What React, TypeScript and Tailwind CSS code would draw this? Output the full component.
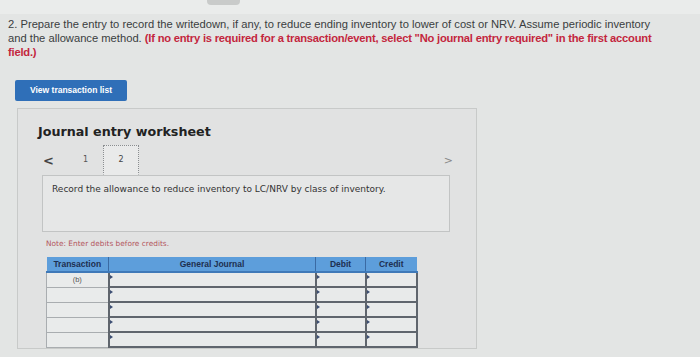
import React from "react"

const ROWS = 5

function Marker() {
  return (
    <span className="absolute left-0 top-[2px] h-0 w-0 border-y-[2px] border-l-[3px] border-y-transparent border-l-[#3b4d72]" />
  )
}

function JournalTable() {
  return (
    <table className="ml-[28px] mt-[8px] w-[370px] table-fixed border-collapse font-['Liberation_Sans',Arial,sans-serif] text-[8.5px]">
      <colgroup>
        <col className="w-[62px]" />
        <col className="w-[207px]" />
        <col className="w-[50px]" />
        <col className="w-[51px]" />
      </colgroup>
      <thead>
        <tr className="h-[15px] bg-[#5d9edb] text-[#1d2f50]">
          <th className="border-b-2 border-r border-b-[#3f79b8] border-r-[#3a6aa3] font-bold">Transaction</th>
          <th className="border-b-2 border-r border-b-[#3f79b8] border-r-[#3a6aa3] font-bold">General Journal</th>
          <th className="border-b-2 border-r border-b-[#3f79b8] border-r-[#3a6aa3] font-bold">Debit</th>
          <th className="border-b-2 border-b-[#3f79b8] font-bold">Credit</th>
        </tr>
      </thead>
      <tbody>
        {Array.from({ length: ROWS }).map((_, i) => (
          <tr key={i} className="h-[15px]">
            <td className="border border-[#a9adb0] bg-[#e9ebeb] text-center text-[7.5px] text-[#555]">
              {i === 0 ? "(b)" : ""}
            </td>
            <td className="relative border-x-2 border-b-2 border-[#5f656d] bg-[#e8eaea]">
              <Marker />
            </td>
            <td className="relative border-x-2 border-b-2 border-[#5f656d] bg-[#e8eaea]">
              <Marker />
            </td>
            <td className="relative border-x-2 border-b-2 border-[#5f656d] bg-[#e8eaea]">
              <Marker />
            </td>
          </tr>
        ))}
      </tbody>
    </table>
  )
}

export default function App() {
  return (
    <div className="h-[357px] w-[700px] overflow-hidden bg-[#e3e5e4]">
      <div className="h-[14px] bg-[#eaeceb] pl-[207px]">
        <div className="h-[5px] w-[33px] rounded-b-[4px] bg-[#c9cbca]" />
      </div>

      <p className="mt-[3px] whitespace-nowrap pl-[8px] font-['Liberation_Sans',Arial,sans-serif] text-[11.2px] leading-[14px] text-[#3a3d40]">
        2. Prepare the entry to record the writedown, if any, to reduce ending inventory to lower of cost or NRV. Assume periodic inventory
        <br />
        and the allowance method.{" "}
        <strong className="font-bold tracking-[-0.22px] text-[#c3263d]">
          (If no entry is required for a transaction/event, select "No journal entry required" in the first account
          <br />
          field.)
        </strong>
      </p>

      <button className="ml-[15px] mt-[21px] flex h-[21px] w-[112px] items-center justify-center rounded-[2px] bg-[#2f6fb8] font-['Liberation_Sans',Arial,sans-serif] text-[8.5px] font-bold text-white">
        View transaction list
      </button>

      <div className="ml-[17px] mt-[7px] h-[241px] w-[460px] border border-[#c8cac9] bg-[#e1e2e2] font-['DejaVu_Sans',Verdana,sans-serif]">
        <h2 className="ml-[20px] mt-[15px] text-[12.7px] font-bold leading-[16px] text-[#222]">Journal entry worksheet</h2>

        <div className="ml-[24px] mt-[5px] flex h-[30px] w-[408px] items-center">
          <span className="ml-[1px] text-[13px] font-bold leading-none text-[#444]">&lt;</span>
          <span className="ml-[29px] text-[8px] text-[#555]">1</span>
          <span className="ml-[15px] flex h-[30px] w-[36px] items-center justify-center border border-dotted border-[#8a8d90] border-b-transparent bg-[#e9eaea] text-[8px] text-[#444]">
            2
          </span>
          <span className="ml-auto mr-[-3px] text-[11px] leading-none text-[#888]">&gt;</span>
        </div>

        <div className="ml-[24px] h-[57px] w-[408px] border border-[#c2c4c4] bg-[#e6e7e7] px-[9px] pt-[7px] text-[9px] text-[#333]">
          Record the allowance to reduce inventory to LC/NRV by class of inventory.
        </div>

        <p className="ml-[28px] mt-[6px] text-[7.4px] text-[#b3555d]">Note: Enter debits before credits.</p>

        <JournalTable />
      </div>
    </div>
  )
}
